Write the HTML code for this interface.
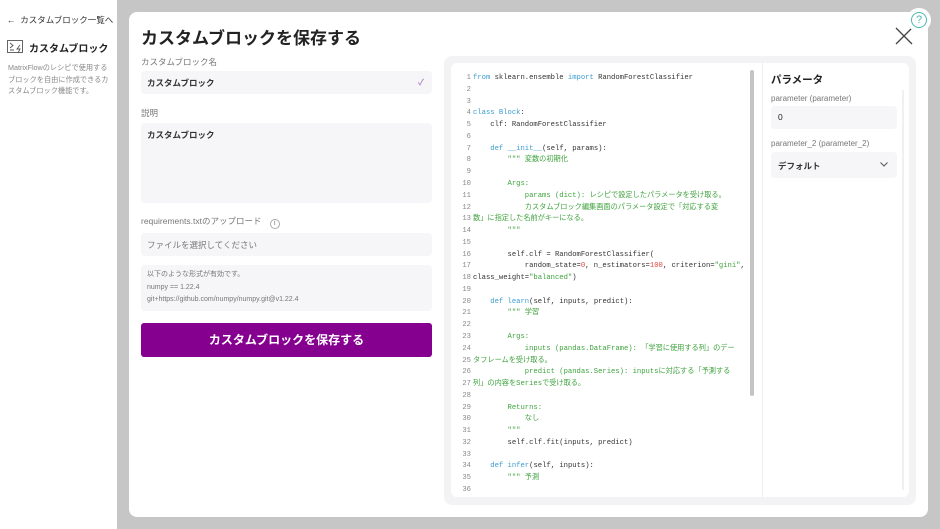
<!DOCTYPE html>
<html><head><meta charset="utf-8"><style>
*{box-sizing:border-box;margin:0;padding:0}
body{width:940px;height:529px;overflow:hidden;background:#c6c6c6;font-family:"Liberation Sans","Noto Sans CJK JP",sans-serif;color:#222;position:relative}
.side{position:absolute;left:0;top:0;width:117px;height:529px;background:#fff}
.abs{position:absolute}
.modal{position:absolute;left:129px;top:12px;width:799px;height:505px;background:#fff;border-radius:8px}
.lbl{position:absolute;font-size:8.5px;color:#777;line-height:12px}
.field{position:absolute;left:12px;width:291px;background:#f6f6f8;border-radius:4px;font-size:8.5px}
.code{position:absolute;left:451px;top:65px;width:311px;height:430px;overflow:hidden;font-family:"Liberation Mono","Noto Sans CJK JP",monospace;font-size:7.2px;color:#333}
.ln{position:absolute;left:0;width:20px;text-align:right;color:#888;line-height:11px;height:11px}
.cl{position:absolute;left:22px;white-space:pre;line-height:11px;height:11px}
.k{color:#3b9bd0}.g{color:#3fa33f}.r{color:#e0443e}
</style></head><body>
<div class="side">
  <div class="abs" style="left:7px;top:14px;font-size:8.5px;color:#333">←&nbsp; カスタムブロック一覧へ</div>
  <svg class="abs" style="left:7px;top:40px" width="18" height="14" viewBox="0 0 18 14"><rect x="0.5" y="0.5" width="15" height="12" fill="none" stroke="#555" stroke-width="0.9"/><path d="M3 3l3 2.5-3 2.5M3 10h4" fill="none" stroke="#555" stroke-width="0.9"/><path d="M13 5l-3 4h3l-2 4" fill="none" stroke="#555" stroke-width="0.9"/></svg>
  <div class="abs" style="left:29px;top:40px;font-size:10px;font-weight:bold;color:#222">カスタムブロック</div>
  <div class="abs" style="left:8px;top:62px;width:104px;font-size:7.2px;line-height:11.5px;color:#888">MatrixFlowのレシピで使用するブロックを自由に作成できるカスタムブロック機能です。</div>
</div>
<div class="modal">
  <div class="abs" style="left:12px;top:12px;font-size:17px;font-weight:bold;color:#222">カスタムブロックを保存する</div>
  <div class="lbl" style="left:12px;top:44px">カスタムブロック名</div>
  <div class="field" style="top:59px;height:23px;padding:6px 6px;font-weight:bold;color:#333">カスタムブロック<span style="position:absolute;right:8px;top:5px;color:#b88cc8">✓</span></div>
  <div class="lbl" style="left:12px;top:95px">説明</div>
  <div class="field" style="top:111px;height:80px;padding:6px 6px;font-weight:bold;color:#333">カスタムブロック</div>
  <div class="lbl" style="left:12px;top:203px">requirements.txtのアップロード <span style="display:inline-block;width:10px;height:10px;border:1px solid #aaa;border-radius:50%;font-size:7px;text-align:center;line-height:8px;margin-left:6px;vertical-align:-1px">i</span></div>
  <div class="field" style="top:221px;height:23px;padding:6px 6px;color:#777">ファイルを選択してください</div>
  <div class="field" style="top:253px;height:46px;padding:4px 6px;font-size:7px;line-height:12.5px;color:#777">以下のような形式が有効です。<br>numpy == 1.22.4<br>git+https://github.com/numpy/numpy.git@v1.22.4</div>
  <div class="abs" style="left:12px;top:311px;width:291px;height:34px;background:#860090;border-radius:3px;color:#fff;font-size:12px;font-weight:bold;text-align:center;line-height:34px">カスタムブロックを保存する</div>
  <svg class="abs" style="left:766px;top:15px" width="18" height="18" viewBox="0 0 18 18"><path d="M1 1l16 16M17 1L1 17" stroke="#444" stroke-width="1.3"/></svg>
</div>
<div class="abs" style="left:907px;top:8px;width:24px;height:24px;border-radius:50%;background:#fff"></div>
<div class="abs" style="left:911px;top:12px;width:16px;height:16px;border-radius:50%;border:1.3px solid #4cb8b0;color:#4cb8b0;font-size:11px;text-align:center;line-height:14px">?</div>
<div class="abs" style="left:444px;top:56px;width:472px;height:449px;background:#f3f3f5;border-radius:8px"></div>
<div class="abs" style="left:451px;top:63px;width:458px;height:434px;background:#fff;border-radius:6px"></div>
<div class="abs" style="left:762px;top:63px;width:1px;height:434px;background:#eee"></div>
<div class="abs" style="left:750px;top:70px;width:4px;height:326px;background:#c4c4c4;border-radius:2px"></div>
<div class="abs" style="left:902px;top:90px;width:2px;height:400px;background:#f0f0f0"></div>
<div class="code">
<div id="c"></div>
</div>
<div class="abs" style="left:771px;top:72px;font-size:10.5px;font-weight:bold;color:#222">パラメータ</div>
<div class="abs" style="left:771px;top:94px;font-size:8px;color:#777">parameter (parameter)</div>
<div class="abs" style="left:771px;top:106px;width:126px;height:23px;background:#f6f6f8;border-radius:4px;font-size:8.5px;padding:6px 7px">0</div>
<div class="abs" style="left:771px;top:139px;font-size:8px;color:#777">parameter_2 (parameter_2)</div>
<div class="abs" style="left:771px;top:152px;width:126px;height:26px;background:#f6f6f8;border-radius:4px;font-size:8.5px;padding:8px 7px;font-weight:bold;color:#333">デフォルト<svg style="position:absolute;right:9px;top:10px" width="8" height="5" viewBox="0 0 8 5"><path d="M0.5 0.5l3.5 3.5 3.5-3.5" fill="none" stroke="#555"/></svg></div>
<script>
var L=[
'<span class="k">from</span> sklearn.ensemble <span class="k">import</span> RandomForestClassifier','','',
'<span class="k">class</span> <span class="k">Block</span>:','    clf: RandomForestClassifier','',
'    <span class="k">def</span> <span class="k">__init__</span>(self, params):',
'<span class="g">        """ 変数の初期化</span>','',
'<span class="g">        Args:</span>',
'<span class="g">            params (dict): レシピで設定したパラメータを受け取る。</span>',
'<span class="g">            カスタムブロック編集画面のパラメータ設定で「対応する変</span>',
'<span class="g">数」に指定した名前がキーになる。</span>',
'<span class="g">        """</span>','',
'        self.clf = RandomForestClassifier(',
'            random_state=<span class="r">0</span>, n_estimators=<span class="r">100</span>, criterion=<span class="g">"gini"</span>,',
'class_weight=<span class="g">"balanced"</span>)','',
'    <span class="k">def</span> <span class="k">learn</span>(self, inputs, predict):',
'<span class="g">        """ 学習</span>','',
'<span class="g">        Args:</span>',
'<span class="g">            inputs (pandas.DataFrame): 「学習に使用する列」のデー</span>',
'<span class="g">タフレームを受け取る。</span>',
'<span class="g">            predict (pandas.Series): inputsに対応する「予測する</span>',
'<span class="g">列」の内容をSeriesで受け取る。</span>','',
'<span class="g">        Returns:</span>',
'<span class="g">            なし</span>',
'<span class="g">        """</span>',
'        self.clf.fit(inputs, predict)','',
'    <span class="k">def</span> <span class="k">infer</span>(self, inputs):',
'<span class="g">        """ 予測</span>',''];
var h='';for(var i=0;i<L.length;i++){var t=(8+i*11.77).toFixed(1);h+='<div class="ln" style="top:'+t+'px">'+(i+1)+'</div><div class="cl" style="top:'+t+'px">'+L[i]+'</div>';}
document.getElementById('c').innerHTML=h;
</script>
</body></html>
